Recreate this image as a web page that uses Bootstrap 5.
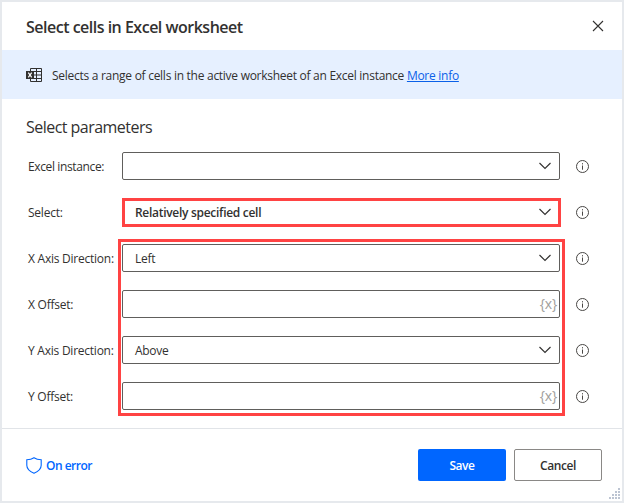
<!DOCTYPE html>
<html lang="en">
<head>
<meta charset="utf-8">
<meta name="viewport" content="width=device-width, initial-scale=1">
<title>Select cells in Excel worksheet</title>
<link href="https://cdn.jsdelivr.net/npm/bootstrap@5.3.0/dist/css/bootstrap.min.css" rel="stylesheet">
<style>
body{font-family:"Open Sans","Noto Sans",sans-serif;font-size:12px;line-height:16px;letter-spacing:-.29px;color:#323130;background:#fff}
svg{display:block;flex:none}
.dialog{width:624px;height:503px;border:2px solid #e6e9ed}
.dlg-head{height:48px;padding:2px 18px 0 24px}
.dlg-title{font-size:16px;font-weight:600;letter-spacing:-.5px;line-height:20px}
.dlg-close{width:12px;height:12px;margin-top:-2px}
.info-bar{height:49px;background:#e6f0ff;padding:1px 24px 0;letter-spacing:-.275px}
.info-text{margin-left:10px;padding-top:1px}
.info-bar a{color:#0a60e8}
.params{height:329px;padding:17px 0 0 24px}
.params-title{font-size:16px;line-height:22px;letter-spacing:-.53px;font-weight:400;margin-bottom:14px}
.param{height:28px;margin-bottom:18px}
.param-label{width:96px;padding-left:2px;padding-top:2px;flex:none;white-space:nowrap;letter-spacing:-.24px}
.param-label.tight{letter-spacing:-.37px}
.field{width:438px;height:28px;border:1px solid #605e5c;border-radius:2px;padding:0 8px 0 12px;margin-right:16px;flex:none;background:#fff}
.field-text{padding-top:2px}
.field.token{padding-right:2px}
.field.marked{width:439px;height:29px;border:3px solid #ff4343;border-radius:0;padding:0 7px 0 10px;margin:0 15px 0 0}
.info-icon{width:13px;height:13px;margin-top:1px}
.token-mark{font-size:14px;letter-spacing:-.2px;color:#a19f9d;line-height:16px}
.group-mark{left:116px;top:237px;width:447px;height:177px;border:3px solid #ff4343;pointer-events:none}
.dlg-foot{height:73px;border-top:1px solid #e1e4e8;padding:0 20px 0 24px}
.on-error{color:#0066ff;font-weight:600;letter-spacing:-.5px}
.on-error span{padding-top:2px}
.dlg-btn{width:88px;height:32px;padding:1px 0 0;border-radius:2px;font-size:12px;line-height:16px;font-weight:600;letter-spacing:-.42px}
.btn-save,.btn-save:hover{background:#0066ff;color:#fff}
.btn-cancel,.btn-cancel:hover{background:#fff;border:1px solid #8a8886;color:#323130}
.grip{right:2px;bottom:2px}
</style>
<script src="https://cdn.jsdelivr.net/npm/bootstrap@5.3.0/dist/js/bootstrap.bundle.min.js"></script>
</head>
<body class="overflow-hidden">
<svg width="0" height="0" class="position-absolute" aria-hidden="true">
  <symbol id="i-info" viewBox="0 0 13 13"><circle cx="6.5" cy="6.5" r="6" fill="none" stroke="#484644"/><path d="M6.500 5.500v4.200M6.500 3.200v1.200" stroke="#484644" fill="none"/></symbol>
  <symbol id="i-chev" viewBox="0 0 12 8"><path d="M.5 1 6 6.500 11.500 1" fill="none" stroke="#323130" stroke-width="1.15"/></symbol>
</svg>
<div class="dialog position-relative">
  <header class="dlg-head d-flex align-items-center justify-content-between">
    <h1 class="dlg-title m-0">Select cells in Excel worksheet</h1>
    <svg class="dlg-close" viewBox="0 0 12 12"><path d="M1 1l10 10M11 1 1 11" stroke="#323130" stroke-width="1.1"/></svg>
  </header>
  <div class="info-bar d-flex align-items-center">
    <svg width="16" height="14" viewBox="0 0 16 14"><path d="M4.500 3V.5h11v13h-11V11M4.500 3.500h11M4.500 7h11M4.500 10.500h11M10.500 .5v13" fill="none" stroke="#323130"/><path d="M0 3h8v8H0z" fill="#323130"/><path d="M2.300 4.700l3.400 4.600M5.700 4.700 2.300 9.300" stroke="#fff" stroke-width="1.2"/></svg>
    <span class="info-text text-nowrap">Selects a range of cells in the active worksheet of an Excel instance <a href="#">More info</a></span>
  </div>
  <main class="params">
    <h2 class="params-title">Select parameters</h2>
    <div class="param d-flex align-items-center"><span class="param-label tight">Excel instance:</span><div class="field d-flex align-items-center justify-content-end"><svg width="12" height="8"><use href="#i-chev"/></svg></div><svg class="info-icon"><use href="#i-info"/></svg></div>
    <div class="param d-flex align-items-center"><span class="param-label">Select:</span><div class="field marked d-flex align-items-center justify-content-between fw-semibold"><span class="field-text">Relatively specified cell</span><svg width="12" height="8"><use href="#i-chev"/></svg></div><svg class="info-icon"><use href="#i-info"/></svg></div>
    <div class="param d-flex align-items-center"><span class="param-label">X Axis Direction:</span><div class="field d-flex align-items-center justify-content-between"><span class="field-text">Left</span><svg width="12" height="8"><use href="#i-chev"/></svg></div><svg class="info-icon"><use href="#i-info"/></svg></div>
    <div class="param d-flex align-items-center"><span class="param-label">X Offset:</span><div class="field token d-flex align-items-center justify-content-end"><span class="token-mark">{x}</span></div><svg class="info-icon"><use href="#i-info"/></svg></div>
    <div class="param d-flex align-items-center"><span class="param-label">Y Axis Direction:</span><div class="field d-flex align-items-center justify-content-between"><span class="field-text">Above</span><svg width="12" height="8"><use href="#i-chev"/></svg></div><svg class="info-icon"><use href="#i-info"/></svg></div>
    <div class="param d-flex align-items-center"><span class="param-label">Y Offset:</span><div class="field token d-flex align-items-center justify-content-end"><span class="token-mark">{x}</span></div><svg class="info-icon"><use href="#i-info"/></svg></div>
  </main>
  <footer class="dlg-foot d-flex align-items-center">
    <div class="on-error d-flex align-items-center gap-1 me-auto"><svg width="16" height="17" viewBox="0 0 16 17"><path d="M8 .8C6 2.200 3.500 2.800 .8 2.800v5.400c0 3.600 3 6.200 7.200 8 4.200-1.800 7.200-4.400 7.200-8V2.800C12.500 2.800 10 2.200 8 .8z" fill="none" stroke="#0066ff" stroke-width="1.1"/></svg><span>On error</span></div>
    <button class="btn dlg-btn btn-save me-2">Save</button>
    <button class="btn dlg-btn btn-cancel">Cancel</button>
  </footer>
  <div class="group-mark position-absolute"></div>
  <svg class="grip position-absolute" width="11" height="11" viewBox="0 0 11 11" fill="#bcc4d2"><path d="M9 0h2v2H9zM9 3h2v2H9zM6 3h2v2H6zM9 6h2v2H9zM6 6h2v2H6zM3 6h2v2H3zM9 9h2v2H9zM6 9h2v2H6zM3 9h2v2H3zM0 9h2v2H0z"/></svg>
</div>
</body>
</html>
